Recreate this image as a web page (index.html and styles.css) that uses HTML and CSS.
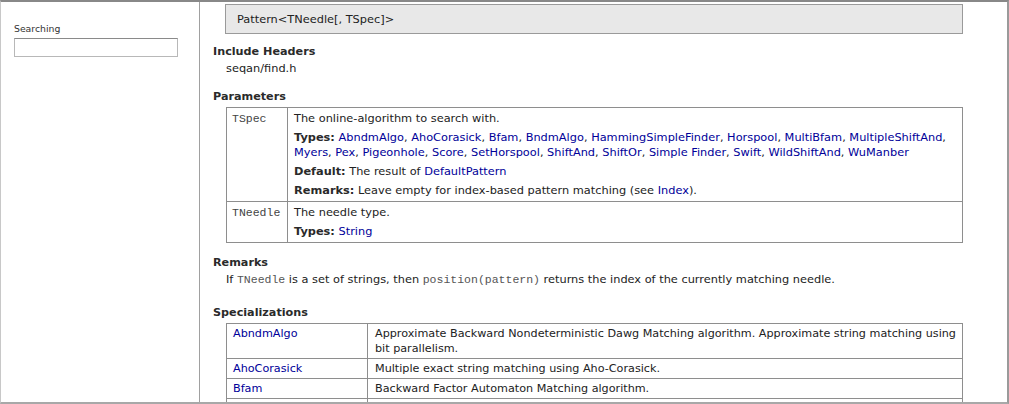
FILE: index.html
```html
<!DOCTYPE html>
<html>
<head>
<meta charset="utf-8">
<title>Pattern</title>
<link rel="stylesheet" href="styles.css">
</head>
<body>
<div class="frame">
  <aside class="sidebar">
    <label class="search-label" for="q">Searching</label>
    <input id="q" class="search-input" type="text">
  </aside>
  <main class="main">
    <div class="signature">Pattern&lt;TNeedle[, TSpec]&gt;</div>

    <h3 class="sec-title first">Include Headers</h3>
    <div class="sec-body">seqan/find.h</div>

    <h3 class="sec-title params-title">Parameters</h3>
    <table class="doc-table params">
      <tr>
        <td class="pname"><code>TSpec</code></td>
        <td class="pdesc">
          <p>The online-algorithm to search with.</p>
          <p><b>Types:</b> <a href="#">AbndmAlgo</a>, <a href="#">AhoCorasick</a>, <a href="#">Bfam</a>, <a href="#">BndmAlgo</a>, <a href="#">HammingSimpleFinder</a>, <a href="#">Horspool</a>, <a href="#">MultiBfam</a>, <a href="#">MultipleShiftAnd</a>, <a href="#">Myers</a>, <a href="#">Pex</a>, <a href="#">Pigeonhole</a>, <a href="#">Score</a>, <a href="#">SetHorspool</a>, <a href="#">ShiftAnd</a>, <a href="#">ShiftOr</a>, <a href="#">Simple Finder</a>, <a href="#">Swift</a>, <a href="#">WildShiftAnd</a>, <a href="#">WuManber</a></p>
          <p><b>Default:</b> The result of <a href="#">DefaultPattern</a></p>
          <p><b>Remarks:</b> Leave empty for index-based pattern matching (see <a href="#">Index</a>).</p>
        </td>
      </tr>
      <tr>
        <td class="pname"><code>TNeedle</code></td>
        <td class="pdesc">
          <p>The needle type.</p>
          <p><b>Types:</b> <a href="#">String</a></p>
        </td>
      </tr>
    </table>

    <h3 class="sec-title remarks-title">Remarks</h3>
    <div class="sec-body">If <code class="inline">TNeedle</code> is a set of strings, then <code class="inline">position(pattern)</code> returns the index of the currently matching needle.</div>

    <h3 class="sec-title spec-title">Specializations</h3>
    <table class="doc-table specs">
      <tr>
        <td class="sname"><a href="#">AbndmAlgo</a></td>
        <td class="sdesc">Approximate Backward Nondeterministic Dawg Matching algorithm. Approximate string matching using bit parallelism.</td>
      </tr>
      <tr>
        <td class="sname"><a href="#">AhoCorasick</a></td>
        <td class="sdesc">Multiple exact string matching using Aho-Corasick.</td>
      </tr>
      <tr>
        <td class="sname"><a href="#">Bfam</a></td>
        <td class="sdesc">Backward Factor Automaton Matching algorithm.</td>
      </tr>
      <tr class="empty-row">
        <td class="sname"></td>
        <td class="sdesc"></td>
      </tr>
    </table>
  </main>
</div>
</body>
</html>
```
FILE: styles.css
```css
html, body {
  margin: 0;
  padding: 0;
  background: #ffffff;
}

body {
  font-family: "DejaVu Sans", Verdana, sans-serif;
  font-size: 11.35px;
  line-height: 15px;
  color: #222222;
}

.frame {
  box-sizing: border-box;
  width: 1009px;
  height: 404px;
  border-top: 2px solid #888888;
  border-left: 1px solid #c8c8c8;
  border-right: 2px solid #9a9a9a;
  border-bottom: 2px solid #a8a8a8;
  display: flex;
  overflow: hidden;
}

.sidebar {
  flex: 0 0 199px;
  border-right: 1px solid #a0a0a0;
  padding: 20px 0 0 13px;
  box-sizing: border-box;
  display: flex;
  flex-direction: column;
  align-items: flex-start;
}

.search-label {
  font-size: 9.3px;
  line-height: 14px;
  color: #333333;
}

.search-input {
  margin: 2px 0 0 0;
  width: 164px;
  height: 19px;
  box-sizing: border-box;
  border: 1px solid #b8b8b8;
  border-top-color: #8a8a8a;
  padding: 0;
  background: #fff;
}

.main {
  flex: 1 1 auto;
  padding: 2px 44px 0 13px;
  min-width: 0;
}

.signature {
  margin-left: 12px;
  height: 28px;
  background: #e8e8e8;
  border: 1px solid #9a9a9a;
  padding-left: 11px;
  line-height: 28px;
  color: #222;
}

.sec-title {
  margin: 0;
  font-size: 11.2px;
  line-height: 15px;
  font-weight: bold;
  color: #2a2a2a;
}

.sec-title.first { margin-top: 10px; }
.sec-title.params-title { margin-top: 13px; }
.sec-title.remarks-title { margin-top: 12px; }
.sec-title.spec-title { margin-top: 18px; }

.sec-body {
  margin: 2px 0 0 13px;
}

.doc-table {
  margin: 3px 0 0 13px;
  width: calc(100% - 13px);
  border-collapse: collapse;
}

.doc-table td {
  border: 1px solid #8e8e8e;
  vertical-align: top;
  padding: 2px 6px;
}

.params td {
  padding: 3px 6px 3px 6px;
}

.params td.pname {
  width: 49px;
  padding-left: 5px;
}

.pdesc p {
  margin: 4px 0 0 0;
}

.pdesc p:first-child {
  margin-top: 0;
}

code {
  font-family: "Liberation Mono", "Courier New", monospace;
  font-size: 11.5px;
  color: #444;
}

.inline {
  color: #555;
}

b {
  color: #2a2a2a;
}

a {
  color: #000099;
  text-decoration: none;
}

.specs td {
  font-size: 11.2px;
}

.specs td.sname {
  width: 128px;
}

.specs td.sdesc {
  padding-left: 7px;
  padding-right: 0;
}

.empty-row td {
  height: 15px;
}
```
